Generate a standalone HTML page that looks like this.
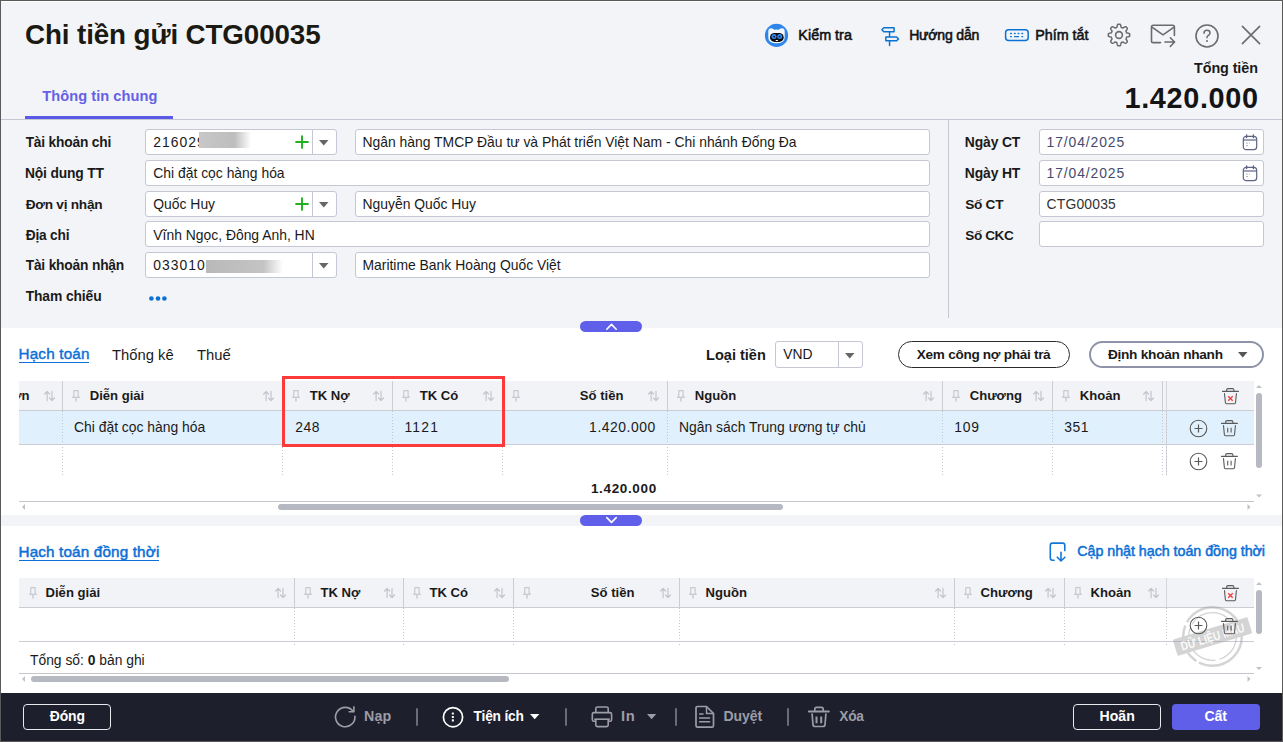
<!DOCTYPE html>
<html><head><meta charset="utf-8"><title>Chi tiền gửi CTG00035</title>
<style>
html,body{margin:0;padding:0;}
body{width:1283px;height:742px;position:relative;overflow:hidden;background:#fff;font-family:"Liberation Sans",sans-serif;}
.t{position:absolute;white-space:nowrap;line-height:1;font-family:"Liberation Sans",sans-serif;}
svg{overflow:visible;}
</style></head><body>
<div style="position:absolute;left:0px;top:0px;width:1283px;height:328px;background:#f3f4f8;"></div>
<div style="position:absolute;left:0px;top:328px;width:1283px;height:187px;background:#ffffff;"></div>
<div style="position:absolute;left:0px;top:515px;width:1283px;height:11px;background:#f3f4f8;"></div>
<div style="position:absolute;left:0px;top:526px;width:1283px;height:167px;background:#ffffff;"></div>
<div style="position:absolute;left:0px;top:693px;width:1283px;height:49px;background:#1e1f2d;"></div>
<div class="t" style="left:25.09px;top:21px;font-size:27.81px;font-weight:700;color:#1b1a12;letter-spacing:-0.131px;">Chi tiền gửi CTG00035</div>
<svg style="position:absolute;left:764px;top:23px;" width="25" height="25" viewBox="0 0 25 25" fill="none"><circle cx="12.5" cy="12.4" r="11.6" fill="#2f86ea"/><path d="M4.3 9.2 Q4 5.2 7.3 5.3 Q9.2 5.5 10.2 6.7 Q12.5 6.1 14.8 6.7 Q15.8 5.5 17.7 5.3 Q21 5.2 20.7 9.2 L20.7 14.2 Q20.7 20.2 12.5 20.2 Q4.3 20.2 4.3 14.2 Z" fill="#f4f8fe"/><rect x="6" y="10" width="13.7" height="8.9" rx="4.45" fill="#0b0b10"/><circle cx="10" cy="13.6" r="2.5" fill="#2f86ea"/><circle cx="15.7" cy="13.6" r="2.5" fill="#2f86ea"/><circle cx="10.2" cy="13.7" r="0.9" fill="#1a1a3a"/><circle cx="15.5" cy="13.7" r="0.9" fill="#1a1a3a"/><rect x="11.6" y="17" width="2.4" height="1.1" rx=".4" fill="#fff"/></svg>
<div class="t" style="left:798.35px;top:28px;font-size:14.39px;font-weight:400;color:#111;letter-spacing:0.002px;-webkit-text-stroke:0.55px #111;">Kiểm tra</div>
<svg style="position:absolute;left:878px;top:24px;" width="24" height="24" viewBox="0 0 24 24" fill="none"><path d="M5.8 3.85 H16.05 V7.75 H5.8 L3.9 5.8 Z" stroke="#0a72d6" stroke-width="1.5" stroke-linejoin="round"/><path d="M11.56 7.75 V12.95" stroke="#0a72d6" stroke-width="1.5"/><path d="M7.85 12.95 H18.6 L20.5 14.9 L18.6 16.85 H7.85 Z" stroke="#0a72d6" stroke-width="1.5" stroke-linejoin="round"/><path d="M11.56 16.85 V21.4" stroke="#0a72d6" stroke-width="1.5" stroke-linecap="round"/></svg>
<div class="t" style="left:909.17px;top:28px;font-size:14.07px;font-weight:400;color:#111;letter-spacing:-0.198px;-webkit-text-stroke:0.55px #111;">Hướng dẫn</div>
<svg style="position:absolute;left:1003px;top:27px;" width="28" height="16" viewBox="0 0 28 16" fill="none"><rect x="2.6" y="2.8" width="22.6" height="10.8" rx="3" stroke="#0a72d6" stroke-width="1.5"/><g fill="#0a72d6"><rect x="7" y="5.8" width="2" height="1.4" rx=".6"/><rect x="10.8" y="5.8" width="2" height="1.4" rx=".6"/><rect x="14.5" y="5.8" width="2" height="1.4" rx=".6"/><rect x="18.3" y="5.8" width="2" height="1.4" rx=".6"/><rect x="7" y="8.9" width="2" height="1.4" rx=".6"/><rect x="11" y="8.9" width="5.1" height="1.4" rx=".6"/><rect x="18.3" y="8.9" width="2" height="1.4" rx=".6"/></g></svg>
<div class="t" style="left:1035.35px;top:28px;font-size:14.33px;font-weight:400;color:#111;letter-spacing:-0.029px;-webkit-text-stroke:0.55px #111;">Phím tắt</div>
<svg style="position:absolute;left:1106px;top:22.4px;" width="26" height="26" viewBox="0 0 26 26" fill="none"><path d="M23.70 13.00 L23.70 13.28 L23.69 13.56 L23.67 13.84 L23.64 14.12 L23.40 14.37 L22.91 14.57 L22.39 14.74 L21.85 14.88 L21.33 15.00 L20.83 15.10 L20.57 15.24 L20.51 15.44 L20.45 15.64 L20.38 15.83 L20.30 16.02 L20.22 16.21 L20.13 16.40 L20.04 16.59 L19.94 16.77 L20.02 17.05 L20.30 17.47 L20.59 17.93 L20.87 18.41 L21.12 18.90 L21.32 19.39 L21.32 19.73 L21.14 19.95 L20.95 20.16 L20.76 20.37 L20.57 20.57 L20.37 20.76 L20.16 20.95 L19.95 21.14 L19.73 21.32 L19.39 21.32 L18.90 21.12 L18.41 20.87 L17.93 20.59 L17.47 20.30 L17.06 20.02 L16.77 19.94 L16.59 20.04 L16.40 20.13 L16.21 20.22 L16.02 20.30 L15.83 20.38 L15.64 20.45 L15.44 20.51 L15.24 20.57 L15.10 20.83 L15.00 21.33 L14.88 21.85 L14.74 22.39 L14.57 22.91 L14.37 23.40 L14.12 23.64 L13.84 23.67 L13.56 23.69 L13.28 23.70 L13.00 23.70 L12.72 23.70 L12.44 23.69 L12.16 23.67 L11.88 23.64 L11.63 23.40 L11.43 22.91 L11.26 22.39 L11.12 21.85 L11.00 21.33 L10.90 20.83 L10.76 20.57 L10.56 20.51 L10.36 20.45 L10.17 20.38 L9.98 20.30 L9.79 20.22 L9.60 20.13 L9.41 20.04 L9.23 19.94 L8.95 20.02 L8.53 20.30 L8.07 20.59 L7.59 20.87 L7.10 21.12 L6.61 21.32 L6.27 21.32 L6.05 21.14 L5.84 20.95 L5.63 20.76 L5.43 20.57 L5.24 20.37 L5.05 20.16 L4.86 19.95 L4.68 19.73 L4.68 19.39 L4.88 18.90 L5.13 18.41 L5.41 17.93 L5.70 17.47 L5.98 17.05 L6.06 16.77 L5.96 16.59 L5.87 16.40 L5.78 16.21 L5.70 16.02 L5.62 15.83 L5.55 15.64 L5.49 15.44 L5.43 15.24 L5.17 15.10 L4.67 15.00 L4.15 14.88 L3.61 14.74 L3.09 14.57 L2.60 14.37 L2.36 14.12 L2.33 13.84 L2.31 13.56 L2.30 13.28 L2.30 13.00 L2.30 12.72 L2.31 12.44 L2.33 12.16 L2.36 11.88 L2.60 11.63 L3.09 11.43 L3.61 11.26 L4.15 11.12 L4.67 11.00 L5.17 10.90 L5.43 10.76 L5.49 10.56 L5.55 10.36 L5.62 10.17 L5.70 9.98 L5.78 9.79 L5.87 9.60 L5.96 9.41 L6.06 9.23 L5.98 8.95 L5.70 8.53 L5.41 8.07 L5.13 7.59 L4.88 7.10 L4.68 6.61 L4.68 6.27 L4.86 6.05 L5.05 5.84 L5.24 5.63 L5.43 5.43 L5.63 5.24 L5.84 5.05 L6.05 4.86 L6.27 4.68 L6.61 4.68 L7.10 4.88 L7.59 5.13 L8.07 5.41 L8.53 5.70 L8.94 5.98 L9.23 6.06 L9.41 5.96 L9.60 5.87 L9.79 5.78 L9.98 5.70 L10.17 5.62 L10.36 5.55 L10.56 5.49 L10.76 5.43 L10.90 5.17 L11.00 4.67 L11.12 4.15 L11.26 3.61 L11.43 3.09 L11.63 2.60 L11.88 2.36 L12.16 2.33 L12.44 2.31 L12.72 2.30 L13.00 2.30 L13.28 2.30 L13.56 2.31 L13.84 2.33 L14.12 2.36 L14.37 2.60 L14.57 3.09 L14.74 3.61 L14.88 4.15 L15.00 4.67 L15.10 5.17 L15.24 5.43 L15.44 5.49 L15.64 5.55 L15.83 5.62 L16.02 5.70 L16.21 5.78 L16.40 5.87 L16.59 5.96 L16.77 6.06 L17.06 5.98 L17.47 5.70 L17.93 5.41 L18.41 5.13 L18.90 4.88 L19.39 4.68 L19.73 4.68 L19.95 4.86 L20.16 5.05 L20.37 5.24 L20.57 5.43 L20.76 5.63 L20.95 5.84 L21.14 6.05 L21.32 6.27 L21.32 6.61 L21.12 7.10 L20.87 7.59 L20.59 8.07 L20.30 8.53 L20.02 8.95 L19.94 9.23 L20.04 9.41 L20.13 9.60 L20.22 9.79 L20.30 9.98 L20.38 10.17 L20.45 10.36 L20.51 10.56 L20.57 10.76 L20.83 10.90 L21.33 11.00 L21.85 11.12 L22.39 11.26 L22.91 11.43 L23.40 11.63 L23.64 11.88 L23.67 12.16 L23.69 12.44 L23.70 12.72 Z" stroke="#6b6b6b" stroke-width="1.5" stroke-linejoin="round"/><circle cx="13" cy="13" r="3.4" stroke="#6b6b6b" stroke-width="1.6"/></svg>
<svg style="position:absolute;left:1149px;top:22px;" width="30" height="28" viewBox="0 0 30 28" fill="none"><path d="M25.4 13.5 V5 Q25.4 3.3 23.7 3.3 H4.2 Q2.5 3.3 2.5 5 V18.9 Q2.5 20.6 4.2 20.6 H11.5" stroke="#6b6b6b" stroke-width="1.6" stroke-linecap="round"/><path d="M3 5.2 L14 12.8 L25 5.2" stroke="#6b6b6b" stroke-width="1.6" stroke-linejoin="round"/><path d="M16 20 H25.5 M21.3 15.8 L25.6 20 L21.3 24.5" stroke="#6b6b6b" stroke-width="1.6" stroke-linecap="round" stroke-linejoin="round"/></svg>
<svg style="position:absolute;left:1194px;top:23px;" width="26" height="26" viewBox="0 0 26 26" fill="none"><circle cx="13" cy="13" r="11" stroke="#6b6b6b" stroke-width="1.6"/><path d="M10 10.3 Q10 7.3 13 7.3 Q16 7.3 16 10 Q16 11.8 13.8 12.8 Q13 13.2 13 14.8" stroke="#6b6b6b" stroke-width="1.5" stroke-linecap="round"/><circle cx="13" cy="17.9" r="1" fill="#6b6b6b"/></svg>
<svg style="position:absolute;left:1240px;top:24px;" width="22" height="22" viewBox="0 0 22 22" fill="none"><path d="M2.4 2.4 L19.6 19.6 M19.6 2.4 L2.4 19.6" stroke="#6b6b6b" stroke-width="1.6" stroke-linecap="round"/></svg>
<div class="t" style="left:1194.06px;top:61px;font-size:14.37px;font-weight:700;color:#1a1a1a;letter-spacing:-0.093px;">Tổng tiền</div>
<div class="t" style="left:1124.47px;top:84px;font-size:28.83px;font-weight:700;color:#141414;letter-spacing:0.661px;">1.420.000</div>
<div class="t" style="left:42.25px;top:89px;font-size:14.62px;font-weight:700;color:#6461e6;letter-spacing:0.049px;">Thông tin chung</div>
<div style="position:absolute;left:25px;top:116px;width:148px;height:3px;background:#5a5ae8;"></div>
<div style="position:absolute;left:1px;top:119px;width:1281px;height:1px;background:#c5c8d2;"></div>
<div class="t" style="left:25.66px;top:136px;font-size:13.75px;font-weight:700;color:#1a1a1a;letter-spacing:-0.182px;">Tài khoản chi</div>
<div class="t" style="left:24.9px;top:167px;font-size:13.83px;font-weight:700;color:#1a1a1a;letter-spacing:-0.157px;">Nội dung TT</div>
<div class="t" style="left:25.73px;top:198px;font-size:13.65px;font-weight:700;color:#1a1a1a;letter-spacing:-0.257px;">Đơn vị nhận</div>
<div class="t" style="left:25.73px;top:229px;font-size:13.72px;font-weight:700;color:#1a1a1a;letter-spacing:-0.204px;">Địa chỉ</div>
<div class="t" style="left:25.66px;top:259px;font-size:13.77px;font-weight:700;color:#1a1a1a;letter-spacing:-0.182px;">Tài khoản nhận</div>
<div class="t" style="left:25.66px;top:290px;font-size:13.89px;font-weight:700;color:#1a1a1a;letter-spacing:-0.126px;">Tham chiếu</div>
<div style="position:absolute;left:145px;top:129px;width:192px;height:26px;box-sizing:border-box;background:#fff;border:1px solid #c5c8d4;border-radius:3px;"></div>
<div style="position:absolute;left:312px;top:130px;width:1px;height:24px;background:#c5c8d4;"></div>
<div style="position:absolute;left:355px;top:129px;width:575px;height:26px;box-sizing:border-box;background:#fff;border:1px solid #c5c8d4;border-radius:3px;"></div>
<div style="position:absolute;left:145px;top:160px;width:785px;height:26px;box-sizing:border-box;background:#fff;border:1px solid #c5c8d4;border-radius:3px;"></div>
<div style="position:absolute;left:145px;top:191px;width:192px;height:26px;box-sizing:border-box;background:#fff;border:1px solid #c5c8d4;border-radius:3px;"></div>
<div style="position:absolute;left:312px;top:192px;width:1px;height:24px;background:#c5c8d4;"></div>
<div style="position:absolute;left:355px;top:191px;width:575px;height:26px;box-sizing:border-box;background:#fff;border:1px solid #c5c8d4;border-radius:3px;"></div>
<div style="position:absolute;left:145px;top:221px;width:785px;height:26px;box-sizing:border-box;background:#fff;border:1px solid #c5c8d4;border-radius:3px;"></div>
<div style="position:absolute;left:145px;top:252px;width:192px;height:26px;box-sizing:border-box;background:#fff;border:1px solid #c5c8d4;border-radius:3px;"></div>
<div style="position:absolute;left:312px;top:253px;width:1px;height:24px;background:#c5c8d4;"></div>
<div style="position:absolute;left:355px;top:252px;width:575px;height:26px;box-sizing:border-box;background:#fff;border:1px solid #c5c8d4;border-radius:3px;"></div>
<svg style="position:absolute;left:319.25px;top:139.60000000000002px;" width="9.5" height="5.4" viewBox="0 0 9.5 5.4" fill="none"><path d="M0 0 H9.5 L4.75 5.4 Z" fill="#666"/></svg>
<svg style="position:absolute;left:319.25px;top:201.60000000000002px;" width="9.5" height="5.4" viewBox="0 0 9.5 5.4" fill="none"><path d="M0 0 H9.5 L4.75 5.4 Z" fill="#666"/></svg>
<svg style="position:absolute;left:319.25px;top:262.6px;" width="9.5" height="5.4" viewBox="0 0 9.5 5.4" fill="none"><path d="M0 0 H9.5 L4.75 5.4 Z" fill="#666"/></svg>
<svg style="position:absolute;left:294.6px;top:134.8px;" width="14" height="14" viewBox="0 0 14 14" fill="none"><path d="M7 1.1 V12.9 M1.1 7 H12.9" stroke="#20b020" stroke-width="1.9" stroke-linecap="round"/></svg>
<svg style="position:absolute;left:294.6px;top:196.8px;" width="14" height="14" viewBox="0 0 14 14" fill="none"><path d="M7 1.1 V12.9 M1.1 7 H12.9" stroke="#20b020" stroke-width="1.9" stroke-linecap="round"/></svg>
<div class="t" style="left:153.3px;top:136px;font-size:13.9px;font-weight:400;color:#1a1a1a;letter-spacing:1px;">216029</div>
<div style="position:absolute;left:199px;top:132px;width:52px;height:16px;background:linear-gradient(90deg,#c8c8c8 0%,#bdbdbd 68%,rgba(255,255,255,0) 100%);"></div>
<div class="t" style="left:153.3px;top:167px;font-size:13.9px;font-weight:400;color:#1a1a1a;">Chi đặt cọc hàng hóa</div>
<div class="t" style="left:153.3px;top:198px;font-size:13.9px;font-weight:400;color:#1a1a1a;">Quốc Huy</div>
<div class="t" style="left:153.3px;top:229px;font-size:13.9px;font-weight:400;color:#1a1a1a;">Vĩnh Ngọc, Đông Anh, HN</div>
<div class="t" style="left:153.3px;top:259px;font-size:13.9px;font-weight:400;color:#1a1a1a;letter-spacing:1px;">0330101</div>
<div style="position:absolute;left:206px;top:260px;width:77px;height:12.5px;background:linear-gradient(90deg,#b9b9b9,#c4c4c4 75%,rgba(255,255,255,0) 100%);"></div>
<div class="t" style="left:362.5px;top:136px;font-size:13.9px;font-weight:400;color:#1a1a1a;">Ngân hàng TMCP Đầu tư và Phát triển Việt Nam - Chi nhánh Đống Đa</div>
<div class="t" style="left:362.5px;top:198px;font-size:13.9px;font-weight:400;color:#1a1a1a;">Nguyễn Quốc Huy</div>
<div class="t" style="left:362.5px;top:259px;font-size:13.9px;font-weight:400;color:#1a1a1a;">Maritime Bank Hoàng Quốc Việt</div>
<svg style="position:absolute;left:148px;top:294px;" width="20" height="9" viewBox="0 0 20 9" fill="none"><circle cx="3.4" cy="4.5" r="2.3" fill="#0b70d4"/><circle cx="10" cy="4.5" r="2.3" fill="#0b70d4"/><circle cx="16.4" cy="4.5" r="2.3" fill="#0b70d4"/></svg>
<div style="position:absolute;left:948px;top:120px;width:1px;height:198px;background:#c5c8d2;"></div>
<div class="t" style="left:964.8px;top:136px;font-size:13.9px;font-weight:700;color:#1a1a1a;letter-spacing:-0.134px;">Ngày CT</div>
<div class="t" style="left:964.8px;top:167px;font-size:13.9px;font-weight:700;color:#1a1a1a;letter-spacing:-0.134px;">Ngày HT</div>
<div class="t" style="left:965.29px;top:198px;font-size:13.66px;font-weight:700;color:#1a1a1a;letter-spacing:-0.310px;">Số CT</div>
<div class="t" style="left:965.29px;top:229px;font-size:13.56px;font-weight:700;color:#1a1a1a;letter-spacing:-0.397px;">Số CKC</div>
<div style="position:absolute;left:1039px;top:129px;width:225px;height:26px;box-sizing:border-box;background:#fff;border:1px solid #c5c8d4;border-radius:3px;"></div>
<div style="position:absolute;left:1039px;top:160px;width:225px;height:26px;box-sizing:border-box;background:#fff;border:1px solid #c5c8d4;border-radius:3px;"></div>
<div style="position:absolute;left:1039px;top:191px;width:225px;height:26px;box-sizing:border-box;background:#fff;border:1px solid #c5c8d4;border-radius:3px;"></div>
<div style="position:absolute;left:1039px;top:221px;width:225px;height:26px;box-sizing:border-box;background:#fff;border:1px solid #c5c8d4;border-radius:3px;"></div>
<svg style="position:absolute;left:1242px;top:133.5px;" width="16" height="17" viewBox="0 0 16 17" fill="none"><rect x="1.3" y="2.3" width="13.4" height="13.4" rx="3" stroke="#5d6485" stroke-width="1.2"/><path d="M1.5 6 H14.5" stroke="#5d6485" stroke-width="1.2"/><path d="M4.6 1 V3.5 M11.4 1 V3.5" stroke="#5d6485" stroke-width="1.4" stroke-linecap="round"/><circle cx="5" cy="9" r=".6" fill="#5d6485"/><circle cx="5" cy="11.6" r=".6" fill="#5d6485"/><circle cx="7.4" cy="9" r=".5" fill="#9aa0b8"/></svg>
<svg style="position:absolute;left:1242px;top:164.5px;" width="16" height="17" viewBox="0 0 16 17" fill="none"><rect x="1.3" y="2.3" width="13.4" height="13.4" rx="3" stroke="#5d6485" stroke-width="1.2"/><path d="M1.5 6 H14.5" stroke="#5d6485" stroke-width="1.2"/><path d="M4.6 1 V3.5 M11.4 1 V3.5" stroke="#5d6485" stroke-width="1.4" stroke-linecap="round"/><circle cx="5" cy="9" r=".6" fill="#5d6485"/><circle cx="5" cy="11.6" r=".6" fill="#5d6485"/><circle cx="7.4" cy="9" r=".5" fill="#9aa0b8"/></svg>
<div class="t" style="left:1046.5px;top:136px;font-size:13.9px;font-weight:400;color:#454b6e;letter-spacing:0.9px;">17/04/2025</div>
<div class="t" style="left:1046.5px;top:167px;font-size:13.9px;font-weight:400;color:#454b6e;letter-spacing:0.9px;">17/04/2025</div>
<div class="t" style="left:1046.5px;top:198px;font-size:13.9px;font-weight:400;color:#333;letter-spacing:0.2px;">CTG00035</div>
<svg style="position:absolute;left:580px;top:321px;" width="62" height="11" viewBox="0 0 62 11" fill="none"><rect x="0" y="0" width="62" height="11" rx="5.5" fill="#5f5fea"/><path d="M26.8 8.2 L31.5 3.4 L36.2 8.2" stroke="#fff" stroke-width="1.6" stroke-linecap="round" stroke-linejoin="round"/></svg>
<svg style="position:absolute;left:580px;top:515px;" width="62" height="11" viewBox="0 0 62 11" fill="none"><rect x="0" y="0" width="62" height="11" rx="5.5" fill="#5f5fea"/><path d="M26.8 2.6 L31.5 7.4 L36.2 2.6" stroke="#fff" stroke-width="1.6" stroke-linecap="round" stroke-linejoin="round"/></svg>
<div class="t" style="left:18.48px;top:346px;font-size:15.28px;font-weight:400;color:#0b6fd6;letter-spacing:0.177px;-webkit-text-stroke:0.4px #0b6fd6;">Hạch toán</div>
<div style="position:absolute;left:19px;top:362px;width:70px;height:1px;background:#0b6fd6;"></div>
<div class="t" style="left:112px;top:348px;font-size:14.8px;font-weight:400;color:#1a1a1a;">Thống kê</div>
<div class="t" style="left:197px;top:348px;font-size:14.8px;font-weight:400;color:#1a1a1a;">Thuế</div>
<div class="t" style="left:706.05px;top:348px;font-size:14.54px;font-weight:700;color:#1a1a1a;letter-spacing:0.005px;">Loại tiền</div>
<div style="position:absolute;left:775px;top:341px;width:88px;height:27px;box-sizing:border-box;background:#fff;border:1px solid #c5c8d4;border-radius:3px;"></div>
<div style="position:absolute;left:838px;top:342px;width:1px;height:25px;background:#c5c8d4;"></div>
<div class="t" style="left:783.2px;top:348px;font-size:13.9px;font-weight:400;color:#1a1a1a;">VND</div>
<svg style="position:absolute;left:844.85px;top:352.5px;" width="9.5" height="5.4" viewBox="0 0 9.5 5.4" fill="none"><path d="M0 0 H9.5 L4.75 5.4 Z" fill="#666"/></svg>
<div style="position:absolute;left:898px;top:341px;width:172px;height:27px;box-sizing:border-box;border:1px solid #2b2b2b;border-radius:14px;background:#fff;"></div>
<div class="t" style="left:916.86px;top:348px;font-size:13.57px;font-weight:700;color:#1a1a1a;letter-spacing:-0.287px;">Xem công nợ phải trả</div>
<div style="position:absolute;left:1089px;top:341px;width:175px;height:27px;box-sizing:border-box;border:2px solid #8e93a8;border-radius:14px;background:#fff;"></div>
<div class="t" style="left:1107.93px;top:348px;font-size:13.65px;font-weight:700;color:#1a1a1a;letter-spacing:-0.258px;">Định khoản nhanh</div>
<svg style="position:absolute;left:1238.05px;top:351.8px;" width="9.5" height="5.4" viewBox="0 0 9.5 5.4" fill="none"><path d="M0 0 H9.5 L4.75 5.4 Z" fill="#555"/></svg>
<div style="position:absolute;left:19px;top:381px;width:1235px;height:29px;background:#f2f3f7;"></div>
<div style="position:absolute;left:19px;top:410px;width:1235px;height:1px;background:#cbcdd5;"></div>
<div style="position:absolute;left:19px;top:411px;width:1147px;height:33px;background:#e1f0fd;"></div>
<div style="position:absolute;left:1167px;top:411px;width:87px;height:33px;background:#e1f0fd;"></div>
<div style="position:absolute;left:19px;top:444px;width:1235px;height:1px;background:#cbcdd5;"></div>
<div style="position:absolute;left:19px;top:381px;width:43px;height:29px;overflow:hidden;"><div class="t" style="left:-6.7px;top:8px;font-size:13.1px;font-weight:700;color:#1a1a1a;">ơn</div>
</div>
<svg style="position:absolute;left:43.5px;top:391px;" width="11" height="11" viewBox="0 0 11 11" fill="none"><path d="M3.1 9.6 V0.8 M0.6 3 L3.1 0.5 L5.6 3" stroke="#c3c5cc" stroke-width="1.2" stroke-linecap="round" stroke-linejoin="round"/><path d="M8 0.4 V9.2 M5.5 7 L8 9.5 L10.5 7" stroke="#c3c5cc" stroke-width="1.2" stroke-linecap="round" stroke-linejoin="round"/></svg>
<svg style="position:absolute;left:72px;top:390px;" width="9" height="12" viewBox="0 0 9 12" fill="none"><path d="M1.8 0.6 H6.1 V6.3 L7.3 7.3 H0.6 L1.8 6.3 Z" stroke="#c8cad0" stroke-width="1.2" stroke-linejoin="round"/><path d="M3.95 7.6 V11.6" stroke="#c8cad0" stroke-width="1.5"/></svg>
<div class="t" style="left:89.7px;top:389px;font-size:13.1px;font-weight:700;color:#1a1a1a;">Diễn giải</div>
<svg style="position:absolute;left:263px;top:391px;" width="11" height="11" viewBox="0 0 11 11" fill="none"><path d="M3.1 9.6 V0.8 M0.6 3 L3.1 0.5 L5.6 3" stroke="#c3c5cc" stroke-width="1.2" stroke-linecap="round" stroke-linejoin="round"/><path d="M8 0.4 V9.2 M5.5 7 L8 9.5 L10.5 7" stroke="#c3c5cc" stroke-width="1.2" stroke-linecap="round" stroke-linejoin="round"/></svg>
<svg style="position:absolute;left:292px;top:390px;" width="9" height="12" viewBox="0 0 9 12" fill="none"><path d="M1.8 0.6 H6.1 V6.3 L7.3 7.3 H0.6 L1.8 6.3 Z" stroke="#c8cad0" stroke-width="1.2" stroke-linejoin="round"/><path d="M3.95 7.6 V11.6" stroke="#c8cad0" stroke-width="1.5"/></svg>
<div class="t" style="left:309.7px;top:389px;font-size:13.1px;font-weight:700;color:#1a1a1a;">TK Nợ</div>
<svg style="position:absolute;left:373px;top:391px;" width="11" height="11" viewBox="0 0 11 11" fill="none"><path d="M3.1 9.6 V0.8 M0.6 3 L3.1 0.5 L5.6 3" stroke="#c3c5cc" stroke-width="1.2" stroke-linecap="round" stroke-linejoin="round"/><path d="M8 0.4 V9.2 M5.5 7 L8 9.5 L10.5 7" stroke="#c3c5cc" stroke-width="1.2" stroke-linecap="round" stroke-linejoin="round"/></svg>
<svg style="position:absolute;left:402px;top:390px;" width="9" height="12" viewBox="0 0 9 12" fill="none"><path d="M1.8 0.6 H6.1 V6.3 L7.3 7.3 H0.6 L1.8 6.3 Z" stroke="#c8cad0" stroke-width="1.2" stroke-linejoin="round"/><path d="M3.95 7.6 V11.6" stroke="#c8cad0" stroke-width="1.5"/></svg>
<div class="t" style="left:419.7px;top:389px;font-size:13.1px;font-weight:700;color:#1a1a1a;">TK Có</div>
<svg style="position:absolute;left:483px;top:391px;" width="11" height="11" viewBox="0 0 11 11" fill="none"><path d="M3.1 9.6 V0.8 M0.6 3 L3.1 0.5 L5.6 3" stroke="#c3c5cc" stroke-width="1.2" stroke-linecap="round" stroke-linejoin="round"/><path d="M8 0.4 V9.2 M5.5 7 L8 9.5 L10.5 7" stroke="#c3c5cc" stroke-width="1.2" stroke-linecap="round" stroke-linejoin="round"/></svg>
<svg style="position:absolute;left:512px;top:390px;" width="9" height="12" viewBox="0 0 9 12" fill="none"><path d="M1.8 0.6 H6.1 V6.3 L7.3 7.3 H0.6 L1.8 6.3 Z" stroke="#c8cad0" stroke-width="1.2" stroke-linejoin="round"/><path d="M3.95 7.6 V11.6" stroke="#c8cad0" stroke-width="1.5"/></svg>
<div class="t" style="right:659.5px;top:389px;font-size:13.1px;font-weight:700;color:#1a1a1a;">Số tiền</div>
<svg style="position:absolute;left:648px;top:391px;" width="11" height="11" viewBox="0 0 11 11" fill="none"><path d="M3.1 9.6 V0.8 M0.6 3 L3.1 0.5 L5.6 3" stroke="#c3c5cc" stroke-width="1.2" stroke-linecap="round" stroke-linejoin="round"/><path d="M8 0.4 V9.2 M5.5 7 L8 9.5 L10.5 7" stroke="#c3c5cc" stroke-width="1.2" stroke-linecap="round" stroke-linejoin="round"/></svg>
<svg style="position:absolute;left:677px;top:390px;" width="9" height="12" viewBox="0 0 9 12" fill="none"><path d="M1.8 0.6 H6.1 V6.3 L7.3 7.3 H0.6 L1.8 6.3 Z" stroke="#c8cad0" stroke-width="1.2" stroke-linejoin="round"/><path d="M3.95 7.6 V11.6" stroke="#c8cad0" stroke-width="1.5"/></svg>
<div class="t" style="left:694.7px;top:389px;font-size:13.1px;font-weight:700;color:#1a1a1a;">Nguồn</div>
<svg style="position:absolute;left:923px;top:391px;" width="11" height="11" viewBox="0 0 11 11" fill="none"><path d="M3.1 9.6 V0.8 M0.6 3 L3.1 0.5 L5.6 3" stroke="#c3c5cc" stroke-width="1.2" stroke-linecap="round" stroke-linejoin="round"/><path d="M8 0.4 V9.2 M5.5 7 L8 9.5 L10.5 7" stroke="#c3c5cc" stroke-width="1.2" stroke-linecap="round" stroke-linejoin="round"/></svg>
<svg style="position:absolute;left:952px;top:390px;" width="9" height="12" viewBox="0 0 9 12" fill="none"><path d="M1.8 0.6 H6.1 V6.3 L7.3 7.3 H0.6 L1.8 6.3 Z" stroke="#c8cad0" stroke-width="1.2" stroke-linejoin="round"/><path d="M3.95 7.6 V11.6" stroke="#c8cad0" stroke-width="1.5"/></svg>
<div class="t" style="left:969.7px;top:389px;font-size:13.1px;font-weight:700;color:#1a1a1a;">Chương</div>
<svg style="position:absolute;left:1033px;top:391px;" width="11" height="11" viewBox="0 0 11 11" fill="none"><path d="M3.1 9.6 V0.8 M0.6 3 L3.1 0.5 L5.6 3" stroke="#c3c5cc" stroke-width="1.2" stroke-linecap="round" stroke-linejoin="round"/><path d="M8 0.4 V9.2 M5.5 7 L8 9.5 L10.5 7" stroke="#c3c5cc" stroke-width="1.2" stroke-linecap="round" stroke-linejoin="round"/></svg>
<svg style="position:absolute;left:1062px;top:390px;" width="9" height="12" viewBox="0 0 9 12" fill="none"><path d="M1.8 0.6 H6.1 V6.3 L7.3 7.3 H0.6 L1.8 6.3 Z" stroke="#c8cad0" stroke-width="1.2" stroke-linejoin="round"/><path d="M3.95 7.6 V11.6" stroke="#c8cad0" stroke-width="1.5"/></svg>
<div class="t" style="left:1079.7px;top:389px;font-size:13.1px;font-weight:700;color:#1a1a1a;">Khoản</div>
<svg style="position:absolute;left:1143px;top:391px;" width="11" height="11" viewBox="0 0 11 11" fill="none"><path d="M3.1 9.6 V0.8 M0.6 3 L3.1 0.5 L5.6 3" stroke="#c3c5cc" stroke-width="1.2" stroke-linecap="round" stroke-linejoin="round"/><path d="M8 0.4 V9.2 M5.5 7 L8 9.5 L10.5 7" stroke="#c3c5cc" stroke-width="1.2" stroke-linecap="round" stroke-linejoin="round"/></svg>
<div style="position:absolute;left:62px;top:381px;width:1px;height:29px;background:#cbcdd5;"></div>
<div style="position:absolute;left:62px;top:411px;width:1px;height:64px;background:repeating-linear-gradient(180deg,#c4c6cd 0 1px,transparent 1px 3px);"></div>
<div style="position:absolute;left:282px;top:381px;width:1px;height:29px;background:#cbcdd5;"></div>
<div style="position:absolute;left:282px;top:411px;width:1px;height:64px;background:repeating-linear-gradient(180deg,#c4c6cd 0 1px,transparent 1px 3px);"></div>
<div style="position:absolute;left:392px;top:381px;width:1px;height:29px;background:#cbcdd5;"></div>
<div style="position:absolute;left:392px;top:411px;width:1px;height:64px;background:repeating-linear-gradient(180deg,#c4c6cd 0 1px,transparent 1px 3px);"></div>
<div style="position:absolute;left:502px;top:381px;width:1px;height:29px;background:#cbcdd5;"></div>
<div style="position:absolute;left:502px;top:411px;width:1px;height:64px;background:repeating-linear-gradient(180deg,#c4c6cd 0 1px,transparent 1px 3px);"></div>
<div style="position:absolute;left:667px;top:381px;width:1px;height:29px;background:#cbcdd5;"></div>
<div style="position:absolute;left:667px;top:411px;width:1px;height:64px;background:repeating-linear-gradient(180deg,#c4c6cd 0 1px,transparent 1px 3px);"></div>
<div style="position:absolute;left:942px;top:381px;width:1px;height:29px;background:#cbcdd5;"></div>
<div style="position:absolute;left:942px;top:411px;width:1px;height:64px;background:repeating-linear-gradient(180deg,#c4c6cd 0 1px,transparent 1px 3px);"></div>
<div style="position:absolute;left:1052px;top:381px;width:1px;height:29px;background:#cbcdd5;"></div>
<div style="position:absolute;left:1052px;top:411px;width:1px;height:64px;background:repeating-linear-gradient(180deg,#c4c6cd 0 1px,transparent 1px 3px);"></div>
<div style="position:absolute;left:1162px;top:381px;width:1px;height:29px;background:#cbcdd5;"></div>
<div style="position:absolute;left:1162px;top:411px;width:1px;height:64px;background:repeating-linear-gradient(180deg,#c4c6cd 0 1px,transparent 1px 3px);"></div>
<div style="position:absolute;left:1166px;top:381px;width:1px;height:94px;background:#d5d7dd;"></div>
<div style="position:absolute;left:1166px;top:411px;width:1px;height:64px;background:repeating-linear-gradient(180deg,#c4c6cd 0 1px,transparent 1px 3px);"></div>
<div class="t" style="left:74px;top:421px;font-size:13.9px;font-weight:400;color:#1a1a1a;">Chi đặt cọc hàng hóa</div>
<div class="t" style="left:295.2px;top:421px;font-size:13.9px;font-weight:400;color:#1a1a1a;letter-spacing:0.5px;">248</div>
<div class="t" style="left:404.4px;top:421px;font-size:13.9px;font-weight:400;color:#1a1a1a;letter-spacing:1.2px;">1121</div>
<div class="t" style="right:627.7px;top:421px;font-size:13.9px;font-weight:400;color:#1a1a1a;letter-spacing:0.55px;margin-right:-0.55px;">1.420.000</div>
<div class="t" style="left:679px;top:421px;font-size:13.9px;font-weight:400;color:#1a1a1a;">Ngân sách Trung ương tự chủ</div>
<div class="t" style="left:954.3px;top:421px;font-size:13.9px;font-weight:400;color:#1a1a1a;letter-spacing:0.8px;">109</div>
<div class="t" style="left:1064.2px;top:421px;font-size:13.9px;font-weight:400;color:#1a1a1a;letter-spacing:0.5px;">351</div>
<div class="t" style="right:626.8px;top:482px;font-size:13.5px;font-weight:700;color:#1a1a1a;letter-spacing:0.65px;margin-right:-0.65px;">1.420.000</div>
<svg style="position:absolute;left:1221.5px;top:388px;" width="17" height="17" viewBox="0 0 17 17" fill="none"><path d="M0.5 3.4 H16.4" stroke="#5a5a5a" stroke-width="1.1" stroke-linecap="round"/><path d="M4.7 3.2 V1.9 Q4.7 0.6 6 0.6 H10.6 Q11.9 0.6 11.9 1.9 V3.2" stroke="#5a5a5a" stroke-width="1.1"/><path d="M2.5 5.6 L3.4 14.8 Q3.5 15.7 4.4 15.7 H12.5 Q13.4 15.7 13.5 14.8 L14.4 5.6" stroke="#5a5a5a" stroke-width="1.1" stroke-linecap="round"/><path d="M6.2 8.3 L10.7 12.8 M10.7 8.3 L6.2 12.8" stroke="#f03c3c" stroke-width="1.3"/></svg>
<svg style="position:absolute;left:1189.0px;top:418.5px;" width="19" height="19" viewBox="0 0 19 19" fill="none"><circle cx="9.5" cy="9.5" r="8.3" stroke="#5a5a5a" stroke-width="1.1"/><path d="M9.5 5.5 V13.5 M5.5 9.5 H13.5" stroke="#5a5a5a" stroke-width="1.2"/></svg>
<svg style="position:absolute;left:1220.5px;top:420px;" width="17" height="17" viewBox="0 0 17 17" fill="none"><path d="M0.5 3.4 H16.4" stroke="#5a5a5a" stroke-width="1.1" stroke-linecap="round"/><path d="M4.7 3.2 V1.9 Q4.7 0.6 6 0.6 H10.6 Q11.9 0.6 11.9 1.9 V3.2" stroke="#5a5a5a" stroke-width="1.1"/><path d="M2.5 5.6 L3.4 14.8 Q3.5 15.7 4.4 15.7 H12.5 Q13.4 15.7 13.5 14.8 L14.4 5.6" stroke="#5a5a5a" stroke-width="1.1" stroke-linecap="round"/><path d="M6.7 7.8 V12.4 M10.1 7.8 V12.4" stroke="#5a5a5a" stroke-width="1.1"/></svg>
<svg style="position:absolute;left:1189.0px;top:451.5px;" width="19" height="19" viewBox="0 0 19 19" fill="none"><circle cx="9.5" cy="9.5" r="8.3" stroke="#5a5a5a" stroke-width="1.1"/><path d="M9.5 5.5 V13.5 M5.5 9.5 H13.5" stroke="#5a5a5a" stroke-width="1.2"/></svg>
<svg style="position:absolute;left:1220.5px;top:453px;" width="17" height="17" viewBox="0 0 17 17" fill="none"><path d="M0.5 3.4 H16.4" stroke="#5a5a5a" stroke-width="1.1" stroke-linecap="round"/><path d="M4.7 3.2 V1.9 Q4.7 0.6 6 0.6 H10.6 Q11.9 0.6 11.9 1.9 V3.2" stroke="#5a5a5a" stroke-width="1.1"/><path d="M2.5 5.6 L3.4 14.8 Q3.5 15.7 4.4 15.7 H12.5 Q13.4 15.7 13.5 14.8 L14.4 5.6" stroke="#5a5a5a" stroke-width="1.1" stroke-linecap="round"/><path d="M6.7 7.8 V12.4 M10.1 7.8 V12.4" stroke="#5a5a5a" stroke-width="1.1"/></svg>
<div style="position:absolute;left:282px;top:376px;width:223px;height:71px;box-sizing:border-box;border:3px solid #fd3a3a;"></div>
<svg style="position:absolute;left:0;top:0" width="1283" height="742"><path d="M1256 388.0 L1262 388.0 L1259 385.0 Z" fill="#c0c2c8"/></svg>
<div style="position:absolute;left:1256px;top:393px;width:6px;height:75px;background:#b6b9c1;border-radius:3px;"></div>
<svg style="position:absolute;left:0;top:0" width="1283" height="742"><path d="M1256 494.5 L1262 494.5 L1259 497.5 Z" fill="#c0c2c8"/></svg>
<div style="position:absolute;left:19px;top:501px;width:1235px;height:1px;background:#c4c6ce;"></div>
<svg style="position:absolute;left:0;top:0" width="1283" height="742"><path d="M25.0 504 L25.0 510 L22.0 507 Z" fill="#c0c2c8"/></svg>
<svg style="position:absolute;left:0;top:0" width="1283" height="742"><path d="M1247.5 504 L1247.5 510 L1250.5 507 Z" fill="#c0c2c8"/></svg>
<div style="position:absolute;left:278px;top:504px;width:505px;height:6px;background:#b6b9c1;border-radius:3px;"></div>
<div class="t" style="left:18.48px;top:544px;font-size:15.26px;font-weight:400;color:#0b6fd6;letter-spacing:0.154px;-webkit-text-stroke:0.5px #0b6fd6;">Hạch toán đồng thời</div>
<div style="position:absolute;left:19px;top:560px;width:140px;height:1px;background:#0b6fd6;"></div>
<svg style="position:absolute;left:1047px;top:540px;" width="22" height="24" viewBox="0 0 22 24" fill="none"><path d="M7.1 20.3 H5.5 Q3.3 20.3 3.3 18.1 V5.3 Q3.3 3.1 5.5 3.1 H15.6 Q17.8 3.1 17.8 5.3 V10.6" stroke="#1276d8" stroke-width="1.6" stroke-linecap="round" stroke-linejoin="round"/><path d="M14 12.2 V21 M10.3 17.2 L14 21 L17.9 17.2" stroke="#1276d8" stroke-width="1.6" stroke-linecap="round" stroke-linejoin="round"/></svg>
<div class="t" style="left:1077.28px;top:544px;font-size:14.31px;font-weight:400;color:#0b6fd6;letter-spacing:-0.046px;-webkit-text-stroke:0.5px #0b6fd6;">Cập nhật hạch toán đồng thời</div>
<div style="position:absolute;left:19px;top:578px;width:1235px;height:29px;background:#f2f3f7;"></div>
<div style="position:absolute;left:19px;top:607px;width:1235px;height:1px;background:#cbcdd5;"></div>
<div style="position:absolute;left:19px;top:641px;width:1235px;height:1px;background:#cbcdd5;"></div>
<svg style="position:absolute;left:29px;top:587px;" width="9" height="12" viewBox="0 0 9 12" fill="none"><path d="M1.8 0.6 H6.1 V6.3 L7.3 7.3 H0.6 L1.8 6.3 Z" stroke="#c8cad0" stroke-width="1.2" stroke-linejoin="round"/><path d="M3.95 7.6 V11.6" stroke="#c8cad0" stroke-width="1.5"/></svg>
<div class="t" style="left:45.5px;top:586px;font-size:13.1px;font-weight:700;color:#1a1a1a;">Diễn giải</div>
<svg style="position:absolute;left:275px;top:588px;" width="11" height="11" viewBox="0 0 11 11" fill="none"><path d="M3.1 9.6 V0.8 M0.6 3 L3.1 0.5 L5.6 3" stroke="#c3c5cc" stroke-width="1.2" stroke-linecap="round" stroke-linejoin="round"/><path d="M8 0.4 V9.2 M5.5 7 L8 9.5 L10.5 7" stroke="#c3c5cc" stroke-width="1.2" stroke-linecap="round" stroke-linejoin="round"/></svg>
<svg style="position:absolute;left:304px;top:587px;" width="9" height="12" viewBox="0 0 9 12" fill="none"><path d="M1.8 0.6 H6.1 V6.3 L7.3 7.3 H0.6 L1.8 6.3 Z" stroke="#c8cad0" stroke-width="1.2" stroke-linejoin="round"/><path d="M3.95 7.6 V11.6" stroke="#c8cad0" stroke-width="1.5"/></svg>
<div class="t" style="left:320.5px;top:586px;font-size:13.1px;font-weight:700;color:#1a1a1a;">TK Nợ</div>
<svg style="position:absolute;left:384px;top:588px;" width="11" height="11" viewBox="0 0 11 11" fill="none"><path d="M3.1 9.6 V0.8 M0.6 3 L3.1 0.5 L5.6 3" stroke="#c3c5cc" stroke-width="1.2" stroke-linecap="round" stroke-linejoin="round"/><path d="M8 0.4 V9.2 M5.5 7 L8 9.5 L10.5 7" stroke="#c3c5cc" stroke-width="1.2" stroke-linecap="round" stroke-linejoin="round"/></svg>
<svg style="position:absolute;left:413px;top:587px;" width="9" height="12" viewBox="0 0 9 12" fill="none"><path d="M1.8 0.6 H6.1 V6.3 L7.3 7.3 H0.6 L1.8 6.3 Z" stroke="#c8cad0" stroke-width="1.2" stroke-linejoin="round"/><path d="M3.95 7.6 V11.6" stroke="#c8cad0" stroke-width="1.5"/></svg>
<div class="t" style="left:429.5px;top:586px;font-size:13.1px;font-weight:700;color:#1a1a1a;">TK Có</div>
<svg style="position:absolute;left:494px;top:588px;" width="11" height="11" viewBox="0 0 11 11" fill="none"><path d="M3.1 9.6 V0.8 M0.6 3 L3.1 0.5 L5.6 3" stroke="#c3c5cc" stroke-width="1.2" stroke-linecap="round" stroke-linejoin="round"/><path d="M8 0.4 V9.2 M5.5 7 L8 9.5 L10.5 7" stroke="#c3c5cc" stroke-width="1.2" stroke-linecap="round" stroke-linejoin="round"/></svg>
<svg style="position:absolute;left:523px;top:587px;" width="9" height="12" viewBox="0 0 9 12" fill="none"><path d="M1.8 0.6 H6.1 V6.3 L7.3 7.3 H0.6 L1.8 6.3 Z" stroke="#c8cad0" stroke-width="1.2" stroke-linejoin="round"/><path d="M3.95 7.6 V11.6" stroke="#c8cad0" stroke-width="1.5"/></svg>
<div class="t" style="right:648.5px;top:586px;font-size:13.1px;font-weight:700;color:#1a1a1a;">Số tiền</div>
<svg style="position:absolute;left:660px;top:588px;" width="11" height="11" viewBox="0 0 11 11" fill="none"><path d="M3.1 9.6 V0.8 M0.6 3 L3.1 0.5 L5.6 3" stroke="#c3c5cc" stroke-width="1.2" stroke-linecap="round" stroke-linejoin="round"/><path d="M8 0.4 V9.2 M5.5 7 L8 9.5 L10.5 7" stroke="#c3c5cc" stroke-width="1.2" stroke-linecap="round" stroke-linejoin="round"/></svg>
<svg style="position:absolute;left:689px;top:587px;" width="9" height="12" viewBox="0 0 9 12" fill="none"><path d="M1.8 0.6 H6.1 V6.3 L7.3 7.3 H0.6 L1.8 6.3 Z" stroke="#c8cad0" stroke-width="1.2" stroke-linejoin="round"/><path d="M3.95 7.6 V11.6" stroke="#c8cad0" stroke-width="1.5"/></svg>
<div class="t" style="left:705.5px;top:586px;font-size:13.1px;font-weight:700;color:#1a1a1a;">Nguồn</div>
<svg style="position:absolute;left:935px;top:588px;" width="11" height="11" viewBox="0 0 11 11" fill="none"><path d="M3.1 9.6 V0.8 M0.6 3 L3.1 0.5 L5.6 3" stroke="#c3c5cc" stroke-width="1.2" stroke-linecap="round" stroke-linejoin="round"/><path d="M8 0.4 V9.2 M5.5 7 L8 9.5 L10.5 7" stroke="#c3c5cc" stroke-width="1.2" stroke-linecap="round" stroke-linejoin="round"/></svg>
<svg style="position:absolute;left:964px;top:587px;" width="9" height="12" viewBox="0 0 9 12" fill="none"><path d="M1.8 0.6 H6.1 V6.3 L7.3 7.3 H0.6 L1.8 6.3 Z" stroke="#c8cad0" stroke-width="1.2" stroke-linejoin="round"/><path d="M3.95 7.6 V11.6" stroke="#c8cad0" stroke-width="1.5"/></svg>
<div class="t" style="left:980.5px;top:586px;font-size:13.1px;font-weight:700;color:#1a1a1a;">Chương</div>
<svg style="position:absolute;left:1045px;top:588px;" width="11" height="11" viewBox="0 0 11 11" fill="none"><path d="M3.1 9.6 V0.8 M0.6 3 L3.1 0.5 L5.6 3" stroke="#c3c5cc" stroke-width="1.2" stroke-linecap="round" stroke-linejoin="round"/><path d="M8 0.4 V9.2 M5.5 7 L8 9.5 L10.5 7" stroke="#c3c5cc" stroke-width="1.2" stroke-linecap="round" stroke-linejoin="round"/></svg>
<svg style="position:absolute;left:1074px;top:587px;" width="9" height="12" viewBox="0 0 9 12" fill="none"><path d="M1.8 0.6 H6.1 V6.3 L7.3 7.3 H0.6 L1.8 6.3 Z" stroke="#c8cad0" stroke-width="1.2" stroke-linejoin="round"/><path d="M3.95 7.6 V11.6" stroke="#c8cad0" stroke-width="1.5"/></svg>
<div class="t" style="left:1090.5px;top:586px;font-size:13.1px;font-weight:700;color:#1a1a1a;">Khoản</div>
<svg style="position:absolute;left:1148px;top:588px;" width="11" height="11" viewBox="0 0 11 11" fill="none"><path d="M3.1 9.6 V0.8 M0.6 3 L3.1 0.5 L5.6 3" stroke="#c3c5cc" stroke-width="1.2" stroke-linecap="round" stroke-linejoin="round"/><path d="M8 0.4 V9.2 M5.5 7 L8 9.5 L10.5 7" stroke="#c3c5cc" stroke-width="1.2" stroke-linecap="round" stroke-linejoin="round"/></svg>
<div style="position:absolute;left:294px;top:578px;width:1px;height:29px;background:#cbcdd5;"></div>
<div style="position:absolute;left:294px;top:608px;width:1px;height:37px;background:repeating-linear-gradient(180deg,#c4c6cd 0 1px,transparent 1px 3px);"></div>
<div style="position:absolute;left:403px;top:578px;width:1px;height:29px;background:#cbcdd5;"></div>
<div style="position:absolute;left:403px;top:608px;width:1px;height:37px;background:repeating-linear-gradient(180deg,#c4c6cd 0 1px,transparent 1px 3px);"></div>
<div style="position:absolute;left:513px;top:578px;width:1px;height:29px;background:#cbcdd5;"></div>
<div style="position:absolute;left:513px;top:608px;width:1px;height:37px;background:repeating-linear-gradient(180deg,#c4c6cd 0 1px,transparent 1px 3px);"></div>
<div style="position:absolute;left:679px;top:578px;width:1px;height:29px;background:#cbcdd5;"></div>
<div style="position:absolute;left:679px;top:608px;width:1px;height:37px;background:repeating-linear-gradient(180deg,#c4c6cd 0 1px,transparent 1px 3px);"></div>
<div style="position:absolute;left:954px;top:578px;width:1px;height:29px;background:#cbcdd5;"></div>
<div style="position:absolute;left:954px;top:608px;width:1px;height:37px;background:repeating-linear-gradient(180deg,#c4c6cd 0 1px,transparent 1px 3px);"></div>
<div style="position:absolute;left:1064px;top:578px;width:1px;height:29px;background:#cbcdd5;"></div>
<div style="position:absolute;left:1064px;top:608px;width:1px;height:37px;background:repeating-linear-gradient(180deg,#c4c6cd 0 1px,transparent 1px 3px);"></div>
<div style="position:absolute;left:1166px;top:578px;width:1px;height:29px;background:#d5d7dd;"></div>
<div style="position:absolute;left:1166px;top:608px;width:1px;height:37px;background:repeating-linear-gradient(180deg,#c4c6cd 0 1px,transparent 1px 3px);"></div>
<svg style="position:absolute;left:1170px;top:598px;" width="85" height="80" viewBox="0 0 85 80" fill="none"><g opacity="0.42"><circle cx="42.5" cy="38.5" r="29.3" stroke="#9a9a9a" stroke-width="2.4" stroke-dasharray="60 3 40 4 70 3"/><circle cx="42.5" cy="38.5" r="23.8" stroke="#9a9a9a" stroke-width="1.3" stroke-dasharray="30 4 50 3 40 5"/><g transform="rotate(-17 42.5 38.5)"><rect x="3.5" y="30" width="78" height="17" rx="1.5" fill="#9a9a9a"/></g></g><g transform="rotate(-17 42.5 38.5)"><text x="42.5" y="43.3" text-anchor="middle" textLength="66" lengthAdjust="spacingAndGlyphs" font-family="Liberation Sans" font-weight="700" font-size="12.5" fill="#ffffff" fill-opacity="0.9">DỮ LIỆU MẪU</text></g></svg>
<svg style="position:absolute;left:1221.5px;top:585px;" width="17" height="17" viewBox="0 0 17 17" fill="none"><path d="M0.5 3.4 H16.4" stroke="#5a5a5a" stroke-width="1.1" stroke-linecap="round"/><path d="M4.7 3.2 V1.9 Q4.7 0.6 6 0.6 H10.6 Q11.9 0.6 11.9 1.9 V3.2" stroke="#5a5a5a" stroke-width="1.1"/><path d="M2.5 5.6 L3.4 14.8 Q3.5 15.7 4.4 15.7 H12.5 Q13.4 15.7 13.5 14.8 L14.4 5.6" stroke="#5a5a5a" stroke-width="1.1" stroke-linecap="round"/><path d="M6.2 8.3 L10.7 12.8 M10.7 8.3 L6.2 12.8" stroke="#f03c3c" stroke-width="1.3"/></svg>
<svg style="position:absolute;left:1188.7px;top:616.2px;" width="19" height="19" viewBox="0 0 19 19" fill="none"><circle cx="9.5" cy="9.5" r="8.3" stroke="#5a5a5a" stroke-width="1.1"/><path d="M9.5 5.5 V13.5 M5.5 9.5 H13.5" stroke="#5a5a5a" stroke-width="1.2"/></svg>
<svg style="position:absolute;left:1220.5px;top:617.5px;" width="17" height="17" viewBox="0 0 17 17" fill="none"><path d="M0.5 3.4 H16.4" stroke="#5a5a5a" stroke-width="1.1" stroke-linecap="round"/><path d="M4.7 3.2 V1.9 Q4.7 0.6 6 0.6 H10.6 Q11.9 0.6 11.9 1.9 V3.2" stroke="#5a5a5a" stroke-width="1.1"/><path d="M2.5 5.6 L3.4 14.8 Q3.5 15.7 4.4 15.7 H12.5 Q13.4 15.7 13.5 14.8 L14.4 5.6" stroke="#5a5a5a" stroke-width="1.1" stroke-linecap="round"/><path d="M6.7 7.8 V12.4 M10.1 7.8 V12.4" stroke="#5a5a5a" stroke-width="1.1"/></svg>
<div class="t" style="left:30px;top:654px;font-size:13.85px;font-weight:400;color:#1a1a1a;">Tổng số: <b>0</b> bản ghi</div>
<div style="position:absolute;left:19px;top:673px;width:1235px;height:1px;background:#c4c6ce;"></div>
<svg style="position:absolute;left:0;top:0" width="1283" height="742"><path d="M25.0 676 L25.0 682 L22.0 679 Z" fill="#c0c2c8"/></svg>
<svg style="position:absolute;left:0;top:0" width="1283" height="742"><path d="M1247.5 676 L1247.5 682 L1250.5 679 Z" fill="#c0c2c8"/></svg>
<div style="position:absolute;left:31px;top:676px;width:478px;height:6px;background:#b6b9c1;border-radius:3px;"></div>
<svg style="position:absolute;left:0;top:0" width="1283" height="742"><path d="M1256 585.0 L1262 585.0 L1259 582.0 Z" fill="#c0c2c8"/></svg>
<div style="position:absolute;left:1256px;top:590px;width:6px;height:44px;background:#b6b9c1;border-radius:3px;"></div>
<svg style="position:absolute;left:0;top:0" width="1283" height="742"><path d="M1256 667.0 L1262 667.0 L1259 670.0 Z" fill="#c0c2c8"/></svg>
<div style="position:absolute;left:23px;top:704px;width:88px;height:26px;box-sizing:border-box;border:1.5px solid #e8e8ee;border-radius:4px;"></div>
<div class="t" style="left:49.83px;top:710px;font-size:13.93px;font-weight:700;color:#ffffff;letter-spacing:-0.139px;">Đóng</div>
<svg style="position:absolute;left:332px;top:704px;" width="26" height="26" viewBox="0 0 26 26" fill="none"><path d="M22.9 12.2 A9.7 9.7 0 1 1 21.15 7.44" stroke="#9c9da6" stroke-width="1.6" stroke-linecap="round"/><path d="M21.9 2.9 V7.7 H17.2" stroke="#9c9da6" stroke-width="1.6" stroke-linecap="round" stroke-linejoin="round"/></svg>
<div class="t" style="left:363.97px;top:709px;font-size:14.25px;font-weight:700;color:#9c9da6;letter-spacing:0.133px;">Nạp</div>
<div style="position:absolute;left:416px;top:708px;width:2px;height:18px;background:#6b6c78;border-radius:1px;"></div>
<svg style="position:absolute;left:441px;top:705px;" width="24" height="24" viewBox="0 0 24 24" fill="none"><circle cx="12" cy="12.2" r="9.6" stroke="#fff" stroke-width="1.7"/><rect x="10.8" y="7.5" width="2.1" height="2.1" rx=".5" fill="#fff"/><rect x="10.8" y="10.9" width="2.1" height="2.1" rx=".5" fill="#fff"/><rect x="10.8" y="14.3" width="2.1" height="2.1" rx=".5" fill="#fff"/></svg>
<div class="t" style="left:473.56px;top:710px;font-size:13.74px;font-weight:700;color:#ffffff;letter-spacing:-0.187px;">Tiện ích</div>
<svg style="position:absolute;left:529.8px;top:714.4px;" width="9.4" height="5.2" viewBox="0 0 9.4 5.2" fill="none"><path d="M0 0 H9.4 L4.7 5.2 Z" fill="#ffffff"/></svg>
<div style="position:absolute;left:565px;top:708px;width:2px;height:18px;background:#6b6c78;border-radius:1px;"></div>
<svg style="position:absolute;left:589px;top:704px;" width="26" height="26" viewBox="0 0 26 26" fill="none"><path d="M6.8 8.4 V4.6 Q6.8 3 8.4 3 H17.6 Q19.2 3 19.2 4.6 V8.4" stroke="#9c9da6" stroke-width="1.6"/><path d="M6.8 17.3 H4.9 Q3.3 17.3 3.3 15.7 V10.2 Q3.3 8.6 4.9 8.6 H21 Q22.6 8.6 22.6 10.2 V15.7 Q22.6 17.3 21 17.3 H19.2" stroke="#9c9da6" stroke-width="1.6"/><path d="M5.2 15.2 H20.8" stroke="#9c9da6" stroke-width="1.6"/><path d="M6.8 15.2 V21 Q6.8 22.6 8.4 22.6 H17.6 Q19.2 22.6 19.2 21 V15.2" stroke="#9c9da6" stroke-width="1.6"/></svg>
<div class="t" style="left:621.04px;top:709px;font-size:14.76px;font-weight:700;color:#9c9da6;letter-spacing:0.507px;">In</div>
<svg style="position:absolute;left:647.4px;top:714.1999999999999px;" width="9.2" height="5.2" viewBox="0 0 9.2 5.2" fill="none"><path d="M0 0 H9.2 L4.6 5.2 Z" fill="#9c9da6"/></svg>
<div style="position:absolute;left:675px;top:708px;width:2px;height:18px;background:#6b6c78;border-radius:1px;"></div>
<svg style="position:absolute;left:693px;top:704px;" width="24" height="26" viewBox="0 0 24 26" fill="none"><path d="M3 4 Q3 2.5 4.5 2.5 H13.5 L20.5 9.5 V21.5 Q20.5 23.2 19 23.2 H4.5 Q3 23.2 3 21.5 Z" stroke="#9c9da6" stroke-width="1.7" stroke-linejoin="round"/><path d="M13.5 2.5 V9.5 H20.5" stroke="#9c9da6" stroke-width="1.5" stroke-linejoin="round"/><path d="M6.6 10 H10 M6.6 14 H16.6 M6.6 17.8 H16.6" stroke="#9c9da6" stroke-width="1.5" stroke-linecap="round"/></svg>
<div class="t" style="left:723.59px;top:709px;font-size:13.99px;font-weight:700;color:#9c9da6;letter-spacing:-0.071px;">Duyệt</div>
<div style="position:absolute;left:787px;top:708px;width:2px;height:18px;background:#6b6c78;border-radius:1px;"></div>
<svg style="position:absolute;left:806px;top:704px;" width="26" height="26" viewBox="0 0 26 26" fill="none"><path d="M2.8 7.5 H22.9" stroke="#9c9da6" stroke-width="1.8" stroke-linecap="round"/><path d="M8.8 7.3 V5 Q8.8 3.3 10.5 3.3 H15.5 Q17.2 3.3 17.2 5 V7.3" stroke="#9c9da6" stroke-width="1.7"/><path d="M6.1 10 L7 20.6 Q7.2 22.5 9 22.5 H17 Q18.8 22.5 19 20.6 L19.9 10" stroke="#9c9da6" stroke-width="1.7" stroke-linecap="round"/><path d="M10.5 12.4 V19.2 M15.2 12.4 V19.2" stroke="#9c9da6" stroke-width="2"/></svg>
<div class="t" style="left:839.36px;top:710px;font-size:13.73px;font-weight:700;color:#9c9da6;letter-spacing:-0.343px;">Xóa</div>
<div style="position:absolute;left:1073px;top:704px;width:88px;height:26px;box-sizing:border-box;border:1.5px solid #e8e8ee;border-radius:4px;"></div>
<div class="t" style="left:1099.58px;top:709px;font-size:14.08px;font-weight:700;color:#ffffff;letter-spacing:-0.014px;">Hoãn</div>
<div style="position:absolute;left:1172px;top:704px;width:88px;height:26px;background:#5f5fea;border-radius:4px;"></div>
<div class="t" style="left:1204.44px;top:709px;font-size:14.07px;font-weight:700;color:#ffffff;letter-spacing:-0.024px;">Cất</div>
<div style="position:absolute;left:0px;top:0px;width:1283px;height:1px;background:#5a5a5a;"></div>
<div style="position:absolute;left:0px;top:741px;width:1283px;height:1px;background:#5a5a5a;"></div>
<div style="position:absolute;left:0px;top:0px;width:1px;height:742px;background:#5a5a5a;"></div>
<div style="position:absolute;left:1282px;top:0px;width:1px;height:742px;background:#5a5a5a;"></div>
<div style="position:absolute;left:1px;top:1px;width:1281px;height:1px;background:#ffffff;"></div>
</body></html>
